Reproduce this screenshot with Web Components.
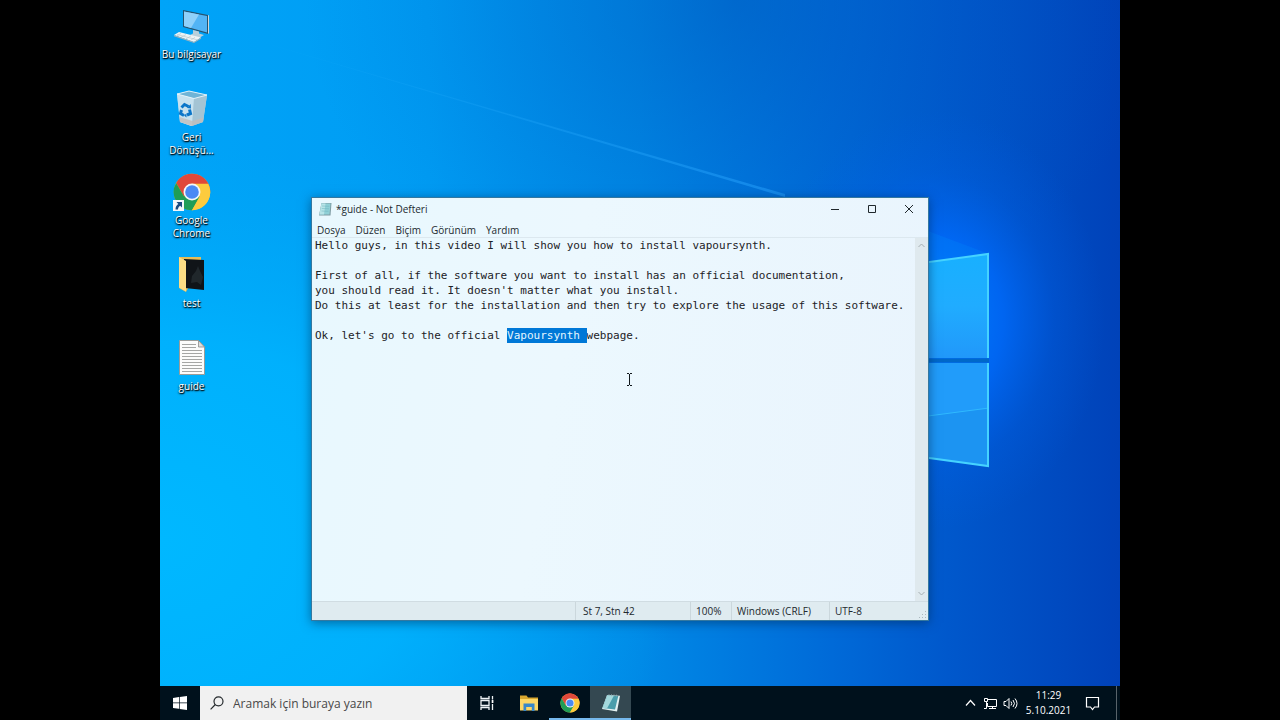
<!DOCTYPE html>
<html lang="tr">
<head>
<meta charset="utf-8">
<title>Masaüstü</title>
<style>
body { margin: 0; background: #000; font-family: "Open Sans", "Noto Sans", sans-serif; font-size: 10px; }
</style>
</head>
<body>
<desk-top>
  <desk-wallpaper slot="wallpaper"></desk-wallpaper>
  <desk-icon slot="icon" icon="pc">Bu bilgisayar</desk-icon>
  <desk-icon slot="icon" icon="bin">Geri Dönüşü...</desk-icon>
  <desk-icon slot="icon" icon="chrome" shortcut>Google Chrome</desk-icon>
  <desk-icon slot="icon" icon="folder">test</desk-icon>
  <desk-icon slot="icon" icon="doc">guide</desk-icon>
  <note-window slot="window" heading="*guide - Not Defteri"></note-window>
  <task-bar slot="taskbar"></task-bar>
</desk-top>
<script>
const ICONS = {
  pc: `<svg viewBox="0 0 40 38" width="40" height="38"><path d="M11 3 36 8v19L11 20Z" fill="#26536e"/><path d="m12 4.500 23 4.500v16.500L12 19Z" fill="#52b4f5"/><path d="m12 4.500 15 3-8 13.500-7-2Z" fill="#8fd0fa"/><path d="m36 8 1 .5V26l-1 1Z" fill="#cfd8dc"/><path d="m21 23 6 1.500v2l5 1.500-5 3-10-2.500 4-2Z" fill="#b9cfda"/><path d="m2 28 5-3 22 5.500-7 4.500Z" fill="#eef3f5"/><path d="m2 28 20 7 7-4.500v1.200L22 36 2 29.200Z" fill="#9eb2bb"/><path d="m5 27.500 20 5.300M9 26.300l-4 2.500m9-1.200-5 2.700m10-1.400-5 2.900m9-1.400-4 2.700" stroke="#b4c3ca" stroke-width=".6" fill="none"/></svg>`,
  bin: `<svg viewBox="0 0 40 38" width="40" height="38"><path d="M5 4 17 1l18 4-4 27-12 4-11-4Z" fill="#b7d8e8"/><path d="M5 4 17 1l18 4-13 3.500Z" fill="#6fb4d6"/><path d="m5 4 17 4.500L20 36 8 32Z" fill="#c8e2ef"/><path d="M22 8.500 35 5l-4 27-11 4Z" fill="#a4c4d4"/><path d="m7.500 27 13 4 11-3.500-.6 4.500L20 36 8 32Z" fill="#c2bebb" opacity=".8"/><path d="M5 4 17 1l18 4-13 3.500Z" fill="none" stroke="#e9f6fc" stroke-width=".9"/><g fill="none" stroke="#0b76c9" stroke-width="3"><path d="m9.500 17.500 3-3 4 2M17.500 19.500l1 4-3.500 1.500M12 25.500l-3.500-2 1-3.500"/></g><path d="m15 18 4 .5-.3-4.500Zm-.5 5.500v4L12 25.500Z" fill="#0b76c9"/></svg>`,
  chrome: `<svg viewBox="0 0 48 48" width="100%" height="100%"><circle cx="24" cy="24" r="23" fill="#fbc733"/><path d="M24 24H47A23 23 0 0 0 4 12.500L14 30Z" fill="#e0483a"/><path d="M4 12.500A23 23 0 0 0 24 47l10-17.300L24 24l-10 5.800Z" fill="#1f9d57"/><path d="M24 13.500h20.500A23 23 0 0 1 24 47l9.500-17Z" fill="#fccb3e"/><circle cx="24" cy="24" r="10.700" fill="#f5f7f8"/><circle cx="24" cy="24" r="8.600" fill="#4a8af4"/></svg>`,
  folder: `<svg viewBox="0 0 40 38" width="40" height="38"><path d="M7 1h22v6L14 36 7 32Z" fill="#e5bd58"/><path d="m12 3 20 1v30L13 32Z" fill="#101418"/><path d="m19 27 1-7 4-5 2-5 2 5 3 6-2 8-4-3Z" fill="#2c3439" opacity=".6"/><path d="m7 1 7 4v30.500l-7-4Z" fill="#fbdd85"/></svg>`,
  doc: `<svg viewBox="0 0 40 38" width="40" height="38"><path d="M7.500 1.500h19l6 6.500v27.500h-25Z" fill="#fcfcfb" stroke="#9b9c99"/><path d="M26.500 1.500V8h6Z" fill="#dededc" stroke="#8c8c8a" stroke-width=".8"/><path d="M10 5.500h14M10 8.500h14M10 11.500h20M10 14.500h20M10 17.500h20M10 20.500h20M10 23.500h20M10 26.500h20M10 29.500h20M10 32.500h20" stroke="#a5a6a4" stroke-width="1"/></svg>`,
  note: `<svg viewBox="0 0 20 20" width="100%" height="100%"><path d="m6 2 13 .8-3 15.700L1 16Z" fill="#e5f2f3"/><path d="m6.500 2 10.800.9L14 16.500 1.500 15Z" fill="#4a9dab"/><path d="m6.500 2 6.500.5L6 15.500 1.500 15Z" fill="#a4d8dc"/><path d="M8 1v2M10.500 1.200v2M13 1.400v2M15.500 1.600v2" stroke="#9aa9ad" stroke-width=".7"/></svg>`,
  noteSmall: `<svg viewBox="0 0 14 14" width="14" height="14"><path d="M3.500 1h10L12.500 13.500H1Z" fill="#7f9ba2"/><path d="M3.500 1.500h9L11.500 12.500H1.500Z" fill="#8fd0d6"/><path d="M3.500 1.500h4L6 12.500H1.500Z" fill="#b8e4e7"/><path d="m4 4 7.300.3M3.800 6.500l7.200.3M3.500 9l7 .3" stroke="#6bb0ba" stroke-width=".5"/></svg>`,
  explorer: `<svg viewBox="0 0 20 18" width="20" height="18"><path d="M1 1.500h6.500l1.500 2h10V8H1Z" fill="#d8a72f"/><path d="M1 5h18v11.500H1Z" fill="#fbd766"/><path d="M4.500 17V9.500h11V17H12.800v-4H7.200v4Z" fill="#3788c9"/></svg>`,
  task: `<svg viewBox="0 0 18 16" width="18" height="16" fill="none" stroke="#eef3f5" stroke-width="1.300"><path d="M2 1v2.500h8V1M2 15v-2.500h8V15M2 5.500h8v5H2ZM13.500 1v3.500M13.500 9v6"/><path d="M12.700 5h1.700v3h-1.700Z" fill="#fff" stroke="none"/></svg>`,
  start: `<svg viewBox="0 0 14 14" width="14" height="14" fill="#fff"><path d="m0 2 6-.9v5.500H0ZM6.700 1 14 0v6.600H6.700ZM0 7.300h6v5.500l-6-.9ZM6.700 7.300H14V14l-7.300-1Z"/></svg>`
};

function define(name, css, html, setup) {
  const template = document.createElement('template');
  customElements.define(name, class extends HTMLElement {
    connectedCallback() {
      if (this.shadowRoot) return;
      const root = this.attachShadow({ mode: 'open' });
      template.innerHTML = `<style>*{box-sizing:border-box}button{font:inherit;color:inherit;background:none;border:0;padding:0;margin:0}svg{display:block}${css}</style>` + (typeof html === 'function' ? html(this) : html);
      root.append(template.content.cloneNode(true));
      if (setup) setup(root, this);
    }
  });
}

define('desk-wallpaper', `:host{display:block;height:100%}svg{width:100%;height:100%}`,
`<svg viewBox="0 0 960 720" preserveAspectRatio="none" aria-hidden="true">
<defs>
<linearGradient id="base" x1="0" y1="0" x2="1" y2="0"><stop offset="0" stop-color="#00a4f8"/><stop offset=".28" stop-color="#009cf3"/><stop offset=".5" stop-color="#0089e6"/><stop offset=".7" stop-color="#006ad8"/><stop offset=".82" stop-color="#0058cc"/><stop offset="1" stop-color="#0042b9"/></linearGradient>
<radialGradient id="left" cx="0" cy=".75" r=".55"><stop offset="0" stop-color="#00b8ff"/><stop offset=".5" stop-color="#00b4fe" stop-opacity=".8"/><stop offset="1" stop-color="#00a8f4" stop-opacity="0"/></radialGradient>
<radialGradient id="glow"><stop offset="0" stop-color="#0080ff"/><stop offset=".4" stop-color="#006cff" stop-opacity=".75"/><stop offset=".7" stop-color="#0064f0" stop-opacity=".25"/><stop offset="1" stop-color="#0060e8" stop-opacity="0"/></radialGradient>
<radialGradient id="top" cx=".6" cy="0" r=".45"><stop offset="0" stop-color="#0054b8" stop-opacity=".45"/><stop offset="1" stop-color="#0060c8" stop-opacity="0"/></radialGradient>
<linearGradient id="beam" x1="0" y1="0" x2="1" y2="0"><stop offset="0" stop-color="#2ab8ff" stop-opacity="0"/><stop offset="1" stop-color="#2aa4ff" stop-opacity=".5"/></linearGradient>
<linearGradient id="pane" x1="0" y1="0" x2="0" y2="1"><stop offset="0" stop-color="#18b0ff"/><stop offset=".5" stop-color="#20acff"/><stop offset="1" stop-color="#2198fa"/></linearGradient>
</defs>
<path d="M0 0h960v720H0Z" fill="url(#base)"/>
<path d="M0 0h960v720H0Z" fill="url(#left)"/>
<path d="M0 0h960v720H0Z" fill="url(#top)"/>
<ellipse cx="775" cy="320" rx="170" ry="210" fill="url(#glow)"/>
<path d="m60 30 565 164v3Z" fill="url(#beam)"/>
<path d="m660 243 108-12 61 23-169 24Z" fill="#0097ff" opacity=".2"/>
<path d="m660 278 169-24v104H660Z" fill="url(#pane)"/>
<path d="M660 363h169v103l-169-24Z" fill="#219cfa"/>
<path d="m768 416 61-8v58l-61-9Z" fill="#1b91ee" opacity=".7"/>
<path d="m768 416 61-8" stroke="#2fb9ff"/>
<path d="m740 266 88-12v104M828 363v103l-88-12" fill="none" stroke="#45d3ff" stroke-width="2"/>
<path d="M740 360.500h89" stroke="#0068c9" stroke-width="4"/>
</svg>`);

define('desk-top', `
:host{display:grid;grid-template-rows:minmax(0,1fr) auto;position:relative;overflow:hidden;height:100vh;width:min(100vw,calc(100vh * 4 / 3));margin:0 auto}
.back{position:absolute;inset:0}
main{position:relative}
.icons{display:grid;grid-template-columns:minmax(0,1fr);grid-auto-rows:83px;width:63px;padding-top:7px}
::slotted(note-window){position:absolute;left:151px;top:197px;right:191px;bottom:65px}`,
`<div class="back"><slot name="wallpaper"></slot></div><main><div class="icons"><slot name="icon"></slot></div><slot name="window"></slot></main><slot name="taskbar"></slot>`);

define('desk-icon', `
:host{display:block;color:#fff}
button{width:100%;display:flex;flex-direction:column;align-items:center;line-height:13px;text-shadow:1px 1px 1px #000,0 1px 2px #000}
.pic{position:relative;width:38px;height:38px;margin-bottom:3px;display:flex;justify-content:center}
.pic svg{flex:none}
.arrow{position:absolute;left:0;bottom:0;width:11px;height:11px}
.label{text-align:center;white-space:nowrap}
:host([icon=bin]) .label,:host([icon=chrome]) .label{white-space:normal;padding:0 4px}`,
el => `<button type="button"><span class="pic">${ICONS[el.getAttribute('icon')]}${el.hasAttribute('shortcut') ? '<svg class="arrow" viewBox="0 0 11 11"><path d="M0 0h11v11H0Z" fill="#f3f7fa"/><path d="M3.500 2H9v5.500L7.200 5.800C5.600 6.800 5 8 5 9.500H2.500C2.500 7 3.500 5.200 5.300 4Z" fill="#1b4a80"/></svg>' : ''}</span><span class="label"><slot></slot></span></button>`);

define('note-window', `
:host{display:grid;grid-template-rows:22px 18px minmax(0,1fr) 19px;background:linear-gradient(100deg,#e8f8fe,#ecf8fe 40%,#e9f4fd);border:1px solid #35789f;box-shadow:0 2px 10px #00285088;color:#22292e}
header{display:flex;align-items:center;padding-left:6px}
.ico{width:14px;height:14px;margin-right:4px}
h1{font-size:10px;font-weight:400;margin:0;flex:1}
header button{width:37px;height:22px;display:grid;place-items:center}
header button:last-child{margin-right:1px}
nav{display:flex;gap:10px;padding-left:5px;border-bottom:1px solid #dce8ef}
nav button{line-height:20px;height:17px}
.body{display:grid;grid-template-columns:minmax(0,1fr) 13px}
textarea{border:0;outline:0;margin:0;padding:0 3px;resize:none;background:none;color:#1c2226;font:11px/15px "DejaVu Sans Mono","Liberation Mono",monospace;overflow:hidden;caret-color:transparent}
textarea::selection{background:#0078d7;color:#e4f6ff}
.scroll{background:#dfe9ee;display:flex;flex-direction:column;justify-content:space-between;align-items:center;padding:4px 0}
footer{display:grid;grid-template-columns:minmax(0,1fr) 115px 41px 98px 99px;background:#dfebf0;border-top:1px solid #d0dce2;line-height:19px;position:relative}
footer span{border-left:1px solid #cbd7dc;padding-left:7px;white-space:nowrap;height:18px}
footer span:nth-child(3),footer span:nth-child(4),footer span:nth-child(5){padding-left:5px}
footer span:first-child{border:0}
.grip{position:absolute;right:1px;bottom:1px}`,
el => `<header><span class="ico">${ICONS.noteSmall}</span><h1>${el.getAttribute('heading')}</h1>
<button type="button" aria-label="Simge durumuna küçült"><svg width="10" height="10" stroke="#20282c"><path d="M1 5.500h8"/></svg></button>
<button type="button" aria-label="Ekranı kapla"><svg width="10" height="10" fill="none" stroke="#20282c"><path d="M1.500 1.500h7v7h-7Z"/></svg></button>
<button type="button" aria-label="Kapat"><svg width="10" height="10" stroke="#20282c"><path d="m1 1 8 8M9 1 1 9"/></svg></button></header>
<nav><button type="button">Dosya</button><button type="button">Düzen</button><button type="button">Biçim</button><button type="button">Görünüm</button><button type="button">Yardım</button></nav>
<div class="body"><textarea aria-label="Metin düzenleyici" spellcheck="false" wrap="off">Hello guys, in this video I will show you how to install vapoursynth.

First of all, if the software you want to install has an official documentation,
you should read it. It doesn't matter what you install.
Do this at least for the installation and then try to explore the usage of this software.

Ok, let's go to the official Vapoursynth webpage.</textarea>
<div class="scroll"><svg width="7" height="7" fill="none" stroke="#a5aeb2"><path d="m.5 5 3-3 3 3"/></svg><svg width="7" height="7" fill="none" stroke="#a5aeb2"><path d="m.5 2 3 3 3-3"/></svg></div></div>
<footer><span></span><span>St 7, Stn 42</span><span>100%</span><span>Windows (CRLF)</span><span>UTF-8</span><svg class="grip" width="8" height="8" fill="#abb8be"><path d="M6 0h1v1H6ZM3 3h1v1H3ZM6 3h1v1H6ZM0 6h1v1H0ZM3 6h1v1H3ZM6 6h1v1H6Z"/></svg></footer><text-cursor></text-cursor>`,
root => {
  const area = root.querySelector('textarea');
  const start = area.value.indexOf('Vapoursynth ');
  area.focus();
  area.setSelectionRange(start, start + 12);
});

define('text-cursor', `:host{position:absolute;left:314px;top:175px;pointer-events:none}`,
`<svg width="7" height="13" fill="none" stroke="#11181c"><path d="M1 .5h2M4 .5h2M1 12.500h2M4 12.500h2M3.500 1v11"/></svg>`);

define('task-bar', `
:host{display:flex;position:relative;height:34px;background:#00111c;color:#fff}
button{display:grid;place-items:center;width:41px;height:34px;flex:none}
.start{width:40px}
.run{border-bottom:2px solid #76b9ed;padding-top:2px}
.active{background:#344851}
.c{width:20px;height:20px}
label{display:flex;align-items:center;flex:0 1 267px;min-width:80px;background:#f1f1f1;padding-left:10px;gap:9px}
input{flex:1;min-width:0;border:0;outline:0;background:none;padding:0;font:12px "Open Sans","Noto Sans",sans-serif}
input::placeholder{color:#484848;opacity:1}
.tray{display:flex;align-items:center;margin-left:auto;flex:none}
.tray button{width:20px}
time{width:57px;text-align:center;line-height:15px}
.tray .notice{width:31px}
.edge{width:4px;margin-left:8px;height:34px;border-left:1px solid #58636a}`,
`<button class="start" type="button" aria-label="Başlat">${ICONS.start}</button>
<label><svg width="14" height="14" viewBox="0 0 14 14" fill="none" stroke="#252a2d" stroke-width="1.200"><circle cx="8.500" cy="5.300" r="4.500"/><path d="M5.300 8.500.6 13.300"/></svg><input type="search" placeholder="Aramak için buraya yazın" aria-label="Arama"></label>
<button type="button" aria-label="Görev Görünümü">${ICONS.task}</button>
<button type="button" aria-label="Dosya Gezgini">${ICONS.explorer}</button>
<button type="button" class="run" aria-label="Google Chrome"><span class="c">${ICONS.chrome}</span></button>
<button type="button" class="run active" aria-label="Not Defteri"><span class="c">${ICONS.note}</span></button>
<div class="tray">
<button type="button" aria-label="Gizli simgeler"><svg width="11" height="8" fill="none" stroke="#fff" stroke-width="1.200"><path d="m1 6.500 4.500-5 4.500 5"/></svg></button>
<button type="button" aria-label="Ağ"><svg width="15" height="13" fill="none" stroke="#fff"><path d="M5 2.500h8.500v7h-9V6M9.500 9.500v2M6 11.500h7M1.500 1.500h3v3h-3ZM3.500 4.500v7H1"/></svg></button>
<button type="button" aria-label="Ses"><svg width="15" height="13" fill="none" stroke="#fff"><path d="M1 4.500h2l3-3v10l-3-3H1ZM8 4.500q1.500 2 0 4M10 3q3 3.500 0 7M12 1.500q4 5 0 10"/></svg></button>
<time datetime="2021-10-05T11:29">11:29<br>5.10.2021</time>
<button class="notice" type="button" aria-label="Bildirimler"><svg width="15" height="15" fill="none" stroke="#fff" stroke-width="1.200"><path d="M1.500 1.500h12v9.500h-4l-2 2.500-2-2.500h-4Z"/></svg></button>
<span class="edge"></span></div>`);
</script>
</body>
</html>
